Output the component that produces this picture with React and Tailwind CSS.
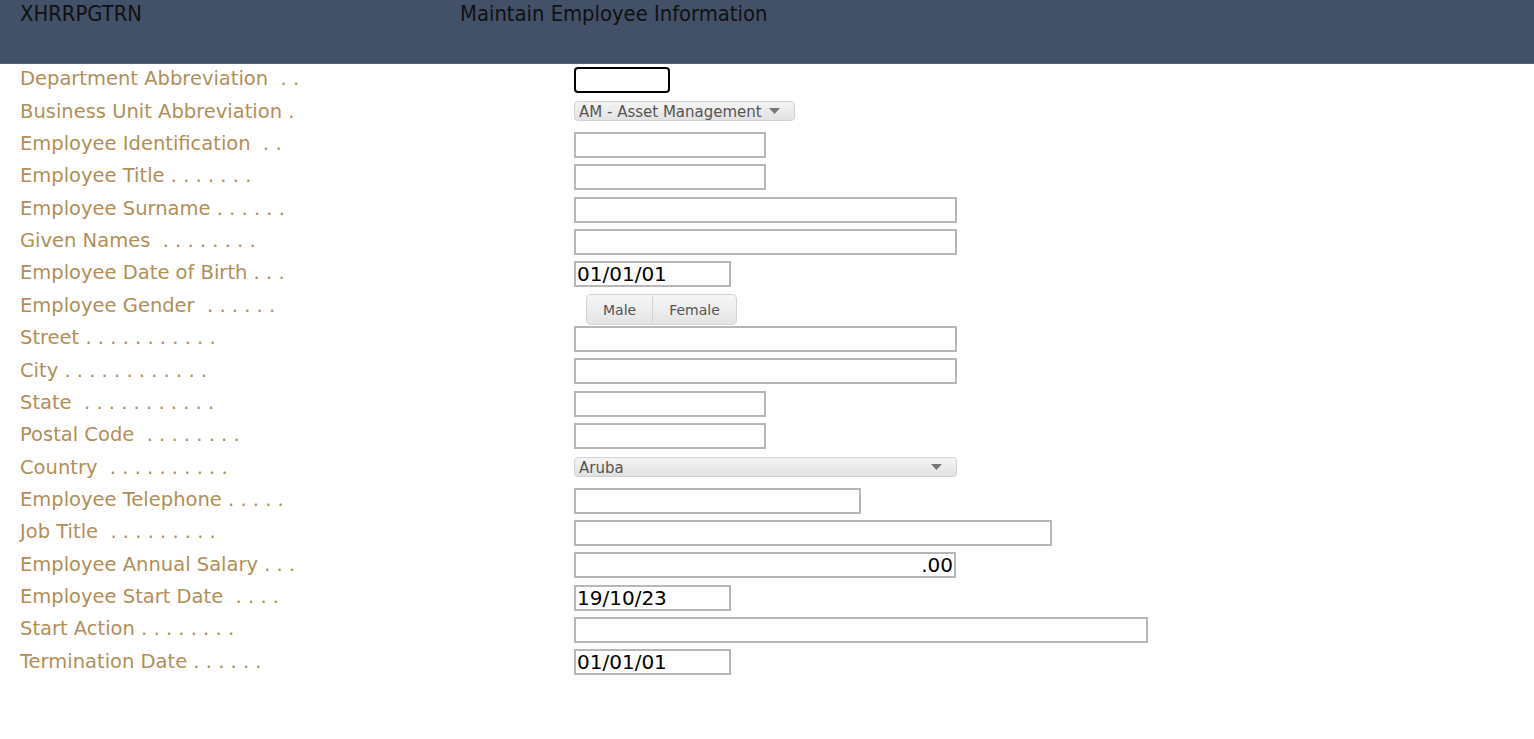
import { useState } from "react";

const rows = [
  { label: "Department Abbreviation  . .", kind: "focus" },
  { label: "Business Unit Abbreviation .", kind: "select", value: "AM - Asset Management", w: "w-[221px]" },
  { label: "Employee Identification  . .", kind: "text", w: "w-[192px]" },
  { label: "Employee Title . . . . . . .", kind: "text", w: "w-[192px]" },
  { label: "Employee Surname . . . . . .", kind: "text", w: "w-[383px]" },
  { label: "Given Names  . . . . . . . .", kind: "text", w: "w-[383px]" },
  { label: "Employee Date of Birth . . .", kind: "text", w: "w-[157px]", value: "01/01/01" },
  { label: "Employee Gender  . . . . . .", kind: "gender" },
  { label: "Street . . . . . . . . . . .", kind: "text", w: "w-[383px]" },
  { label: "City . . . . . . . . . . . .", kind: "text", w: "w-[383px]" },
  { label: "State  . . . . . . . . . . .", kind: "text", w: "w-[192px]" },
  { label: "Postal Code  . . . . . . . .", kind: "text", w: "w-[192px]" },
  { label: "Country  . . . . . . . . . .", kind: "select", value: "Aruba", w: "w-[383px]" },
  { label: "Employee Telephone . . . . .", kind: "text", w: "w-[287px]" },
  { label: "Job Title  . . . . . . . . .", kind: "text", w: "w-[478px]" },
  { label: "Employee Annual Salary . . .", kind: "money", w: "w-[382px]", value: ".00" },
  { label: "Employee Start Date  . . . .", kind: "text", w: "w-[157px]", value: "19/10/23" },
  { label: "Start Action . . . . . . . .", kind: "text", w: "w-[574px]" },
  { label: "Termination Date . . . . . .", kind: "text", w: "w-[157px]", value: "01/01/01" },
];

function Field({ row }) {
  const [gender, setGender] = useState(null);

  if (row.kind === "focus") {
    return (
      <div className="w-[96px] h-[26px] border-2 border-black rounded-[4px] bg-white" />
    );
  }
  if (row.kind === "select") {
    return (
      <div
        className={`${row.w} h-[20px] -mt-[3px] flex items-center justify-between pl-[4px] pr-[14px] rounded-[4px] border border-[#d3d3d3] bg-gradient-to-b from-[#f4f4f4] to-[#e2e2e2] text-[15px] text-[#555] leading-none`}
      >
        <span className="pt-[3px]">{row.value}</span>
        <svg width="11" height="6" viewBox="0 0 11 6">
          <path d="M0 0 L11 0 L5.5 6 Z" fill="#777" />
        </svg>
      </div>
    );
  }
  if (row.kind === "gender") {
    return (
      <div className="ml-[12px] mt-[5px] flex h-[31px] text-[14px] text-[#555]">
        {["Male", "Female"].map((g, i) => (
          <button
            key={g}
            onClick={() => setGender(g)}
            className={`px-[16px] pt-[2px] border border-[#d3d3d3] bg-gradient-to-b from-[#f6f6f6] to-[#e4e4e4] ${
              i === 0 ? "rounded-l-[5px]" : "rounded-r-[5px] border-l-0"
            } ${gender === g ? "from-[#ddd] to-[#ccc]" : ""}`}
          >
            {g}
          </button>
        ))}
      </div>
    );
  }
  return (
    <div
      className={`${row.w} h-[26px] border-2 border-[#b7b7b7] bg-white flex items-center px-[1px] text-[20px] text-black leading-none ${
        row.kind === "money" ? "justify-end" : ""
      }`}
    >
      {row.value}
    </div>
  );
}

export default function App() {
  return (
    <div className="w-[1534px] min-h-[739px] bg-white font-['Verdana','DejaVu_Sans',sans-serif]">
      <div className="h-[64px] bg-[#425068] border-b border-[#55637a] flex items-start text-[21.8px] leading-[28px] text-[#111] font-['DejaVu_Sans_Condensed',sans-serif]">
        <span className="pl-[20px] w-[460px]">XHRRPGTRN</span>
        <span>Maintain Employee Information</span>
      </div>
      <div className="flex flex-col">
        {rows.map((row, i) => (
          <div key={i} className="h-[32.35px] flex items-center">
            <div className="w-[574px] pl-[20px] text-[19.5px] text-[#b08f58] whitespace-pre leading-none -mt-[2px]">
              {row.label}
            </div>
            <Field row={row} />
          </div>
        ))}
      </div>
    </div>
  );
}
